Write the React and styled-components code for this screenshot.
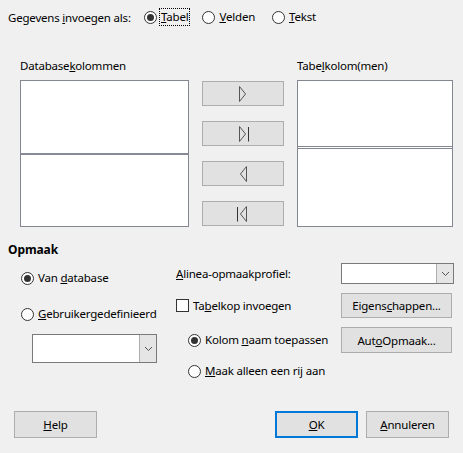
import styled, { createGlobalStyle } from 'styled-components'

const GlobalStyle = createGlobalStyle`
    html, body {
        margin: 0;
        padding: 0;
        background: #f0f0f0;
    }
`

const Dialog = styled.div`
    width: 463px;
    height: 453px;
    background: #f0f0f0;
    font-family: "Noto Sans", "Open Sans", sans-serif;
    font-size: 11.5px;
    letter-spacing: -0.2px;
    color: #000;
    position: relative;
    box-sizing: border-box;
    overflow: hidden;
`

const TopRow = styled.div`
    display: flex;
    align-items: center;
    height: 16px;
    padding: 9px 0 0 8px;
`

const TopLabel = styled.span`
    width: 136px;
`

const Choice = styled.label`
    display: flex;
    align-items: center;
    gap: ${p => p.$gap || 4}px;
    margin-right: ${p => p.$mr || 0}px;
    white-space: nowrap;
    line-height: 16px;
`

const Radio = styled.span`
    width: 13px;
    height: 13px;
    box-sizing: border-box;
    border: 1px solid #333;
    border-radius: 50%;
    background: #fff;
    display: flex;
    align-items: center;
    justify-content: center;
    flex: none;
    &::after {
        content: '';
        width: 7px;
        height: 7px;
        border-radius: 50%;
        background: #333;
        display: ${p => (p.$checked ? 'block' : 'none')};
    }
`

const Check = styled.span`
    width: 13px;
    height: 13px;
    box-sizing: border-box;
    border: 1px solid #333;
    background: #fff;
    flex: none;
`

const Focus = styled.span`
    outline: 1px dotted #000;
    outline-offset: 0px;
    padding: 0 1px;
`

const Columns = styled.div`
    display: grid;
    grid-template-columns: 169px 82px 156px;
    column-gap: 13px;
    padding: 33px 0 0 20px;
`

const ColLabel = styled.div`
    grid-row: 1;
    height: 16px;
    line-height: 16px;
    margin-bottom: 6px;
    grid-column: ${p => p.$col};
`

const ListBox = styled.div`
    grid-row: 2;
    height: 147px;
    box-sizing: border-box;
    border: 1px solid #828790;
    background: #fff;
    display: flex;
    flex-direction: column;
`

const ListTop = styled.div`
    height: ${p => p.$h}px;
    flex: none;
    border-bottom: ${p => p.$line};
`

const MoveButtons = styled.div`
    grid-row: 2;
    grid-column: 2;
    display: flex;
    flex-direction: column;
    gap: 15px;
    padding-top: 1px;
`

const MoveButton = styled.button`
    width: 82px;
    height: 25px;
    box-sizing: border-box;
    border: 1px solid #adadad;
    background: #e1e1e1;
    padding: 0;
    display: flex;
    align-items: center;
    justify-content: center;
`

const FormatSection = styled.div`
    padding: 15px 0 0 8px;
`

const SectionTitle = styled.div`
    font-weight: bold;
    line-height: 16px;
    font-size: 12px;
    letter-spacing: -0.1px;
`

const FormatGrid = styled.div`
    display: grid;
    grid-template-columns: 168px 165px 113px;
    margin-top: 5px;
`

const LeftCol = styled.div`
    display: flex;
    flex-direction: column;
    padding: 6px 0 0 13px;
`

const RowItem = styled.div`
    height: ${p => p.$h}px;
    margin-bottom: ${p => p.$mb || 0}px;
    margin-left: ${p => p.$ml || 0}px;
    display: flex;
    align-items: center;
`

const StackCol = styled.div`
    display: grid;
    grid-template-rows: 21px 25px 26px 18px;
    row-gap: 9px;
`

const Combo = styled.div`
    width: ${p => p.$w}px;
    height: ${p => p.$h}px;
    box-sizing: border-box;
    border: 1px solid #7a7a7a;
    background: #fff;
    display: flex;
    justify-content: flex-end;
`

const ComboArrow = styled.div`
    width: 16px;
    border-left: 1px solid #adadad;
    background: #e5e5e5;
    display: flex;
    align-items: center;
    justify-content: center;
`

const PushButton = styled.button`
    width: ${p => p.$w || 111}px;
    height: ${p => p.$h || 25}px;
    box-sizing: border-box;
    border: ${p => (p.$default ? '2px solid #0078d7' : '1px solid #adadad')};
    background: #e1e1e1;
    font-family: inherit;
    font-size: 11.5px;
    letter-spacing: -0.2px;
    color: #000;
    padding: 0;
`

const Footer = styled.div`
    position: absolute;
    left: 14px;
    right: 14px;
    top: 411px;
    display: flex;
    gap: 8px;
`

const Spacer = styled.div`
    flex: 1;
`

const Chevron = () => (
    <svg width="9" height="6" viewBox="0 0 9 6">
        <path d="M1 1 L4.5 4.5 L8 1" fill="none" stroke="#555" strokeWidth="1" />
    </svg>
)

const Arrow = ({ dir, bar }) => (
    <svg width="12" height="16" viewBox="0 0 12 16">
        {dir === 'right' ? (
            <path d="M2.5 0.5 L8.5 8 L2.5 15.5 Z" fill="none" stroke="#555" />
        ) : (
            <path d="M9.5 0.5 L3.5 8 L9.5 15.5 Z" fill="none" stroke="#555" />
        )}
        {bar && dir === 'right' && <path d="M11.5 1 V15.5" stroke="#333" />}
        {bar && dir === 'left' && <path d="M0.5 1 V15.5" stroke="#333" />}
    </svg>
)

const App = () => {
    return (
        <Dialog>
            <GlobalStyle />
            <TopRow>
                <TopLabel>Gegevens <u>i</u>nvoegen als:</TopLabel>
                <Choice $gap={3} $mr={13}>
                    <Radio $checked />
                    <Focus><u>T</u>abel</Focus>
                </Choice>
                <Choice $mr={17}>
                    <Radio />
                    <span><u>V</u>elden</span>
                </Choice>
                <Choice>
                    <Radio />
                    <span><u>T</u>ekst</span>
                </Choice>
            </TopRow>

            <Columns>
                <ColLabel $col={1}>Database<u>k</u>olommen</ColLabel>
                <ColLabel $col={3}>Tabe<u>l</u>kolom(men)</ColLabel>
                <ListBox>
                    <ListTop $h={72} $line="2px solid #858a94" />
                </ListBox>
                <MoveButtons>
                    <MoveButton><Arrow dir="right" /></MoveButton>
                    <MoveButton><Arrow dir="right" bar /></MoveButton>
                    <MoveButton><Arrow dir="left" /></MoveButton>
                    <MoveButton><Arrow dir="left" bar /></MoveButton>
                </MoveButtons>
                <ListBox>
                    <ListTop $h={65} $line="1px solid #828790" />
                    <ListTop $h={1} $line="1px solid #828790" />
                </ListBox>
            </Columns>

            <FormatSection>
                <SectionTitle>Opmaak</SectionTitle>
                <FormatGrid>
                    <LeftCol>
                        <RowItem $h={18} $mb={18}>
                            <Choice>
                                <Radio $checked />
                                <span>Van <u>d</u>atabase</span>
                            </Choice>
                        </RowItem>
                        <RowItem $h={18} $mb={11}>
                            <Choice>
                                <Radio />
                                <span><u>G</u>ebruikergedefinieerd</span>
                            </Choice>
                        </RowItem>
                        <RowItem $h={29} $ml={11}>
                            <Combo $w={125} $h={29}>
                                <ComboArrow><Chevron /></ComboArrow>
                            </Combo>
                        </RowItem>
                    </LeftCol>
                    <StackCol>
                        <RowItem $h={21}>
                            <span><u>A</u>linea-opmaakprofiel:</span>
                        </RowItem>
                        <RowItem $h={25}>
                            <Choice>
                                <Check />
                                <span>Ta<u>b</u>elkop invoegen</span>
                            </Choice>
                        </RowItem>
                        <RowItem $h={26} $ml={12}>
                            <Choice>
                                <Radio $checked />
                                <span>Kolom <u>n</u>aam toepassen</span>
                            </Choice>
                        </RowItem>
                        <RowItem $h={18} $ml={12}>
                            <Choice>
                                <Radio />
                                <span><u>M</u>aak alleen een rij aan</span>
                            </Choice>
                        </RowItem>
                    </StackCol>
                    <StackCol>
                        <Combo $w={113} $h={21}>
                            <ComboArrow><Chevron /></ComboArrow>
                        </Combo>
                        <PushButton $w={111}>Eigens<u>c</u>happen...</PushButton>
                        <PushButton $w={111} $h={26}>Aut<u>o</u>Opmaak...</PushButton>
                    </StackCol>
                </FormatGrid>
            </FormatSection>

            <Footer>
                <PushButton $w={83} $h={27}><u>H</u>elp</PushButton>
                <Spacer />
                <PushButton $w={83} $h={27} $default><u>O</u>K</PushButton>
                <PushButton $w={83} $h={27}><u>A</u>nnuleren</PushButton>
            </Footer>
        </Dialog>
    )
}

export default App
